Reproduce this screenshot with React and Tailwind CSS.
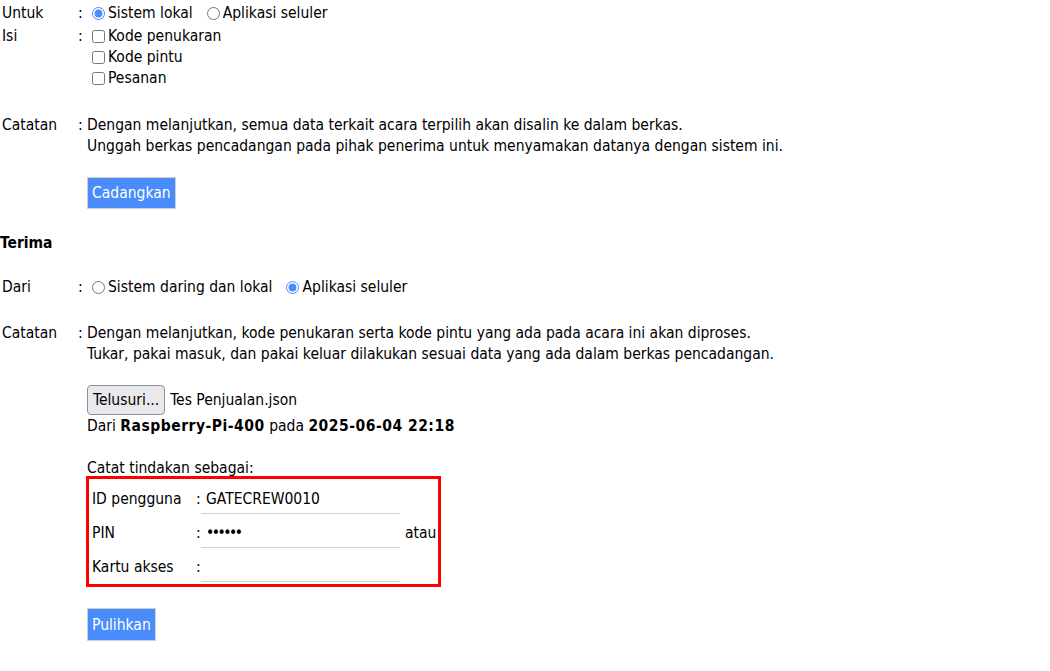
import React, { useState } from "react";

const label = "text-[15.5px] leading-[21px] text-black";
const note = "text-[15.5px] leading-[21px] [font-stretch:condensed]";

const Row = ({ name, children, className = "" }) => (
  <div className={`flex items-start ${className}`}>
    <div className={`w-[78px] pl-[2px] ${label}`}>{name}</div>
    <div className={`w-[10px] ${label}`}>:</div>
    <div className="flex-1">{children}</div>
  </div>
);

const Radio = ({ checked, text, onChange }) => (
  <label className={`flex items-center ${label} mr-[14px]`}>
    <input
      type="radio"
      checked={checked}
      onChange={onChange}
      className="m-0 mr-[3px] h-[13px] w-[13px] accent-[#4a8cfc]"
    />
    {text}
  </label>
);

const Check = ({ text }) => (
  <label className={`flex items-center ${label}`}>
    <input type="checkbox" className="m-0 mr-[3px] h-[13px] w-[13px]" />
    {text}
  </label>
);

const Field = ({ name, value, after, dots = false }) => (
  <div className="flex items-center h-[34px]">
    <div className={`w-[104px] ${label}`}>{name}</div>
    <div className={`w-[5px] ${label}`}>:</div>
    <input
      type="text"
      defaultValue={value}
      className={`w-[199px] h-[30px] px-[5px] border-b border-[#d0d0d0] outline-none text-[15.5px] text-black ${dots ? "tracking-[-2.5px]" : ""}`}
      style={{ fontFamily: "inherit" }}
    />
    {after && <span className={`ml-[5px] ${label}`}>{after}</span>}
  </div>
);

export default function App() {
  const [untuk, setUntuk] = useState("lokal");
  const [dari, setDari] = useState("seluler");

  return (
    <div
      className="w-[1050px] h-[671px] bg-white text-black overflow-hidden pt-[3px]"
      style={{ fontFamily: '"DejaVu Sans Condensed", "DejaVu Sans", sans-serif' }}
    >
      <Row name="Untuk">
        <div className="flex pl-[4px]">
          <Radio checked={untuk === "lokal"} onChange={() => setUntuk("lokal")} text="Sistem lokal" />
          <Radio checked={untuk === "seluler"} onChange={() => setUntuk("seluler")} text="Aplikasi seluler" />
        </div>
      </Row>
      <Row name="Isi" className="mt-[2px]">
        <div className="flex flex-col pl-[4px]">
          <Check text="Kode penukaran" />
          <Check text="Kode pintu" />
          <Check text="Pesanan" />
        </div>
      </Row>

      <Row name="Catatan" className="mt-[26px]">
        <div className={`${note} -ml-[1px]`}>
          <div>Dengan melanjutkan, semua data terkait acara terpilih akan disalin ke dalam berkas.</div>
          <div>Unggah berkas pencadangan pada pihak penerima untuk menyamakan datanya dengan sistem ini.</div>
        </div>
      </Row>

      <div className="pl-[87px] mt-[20px]">
        <button className="h-[32px] px-[4px] pt-[2px] bg-[#4a8cfc] border border-[#cfcfcf] text-white text-[15.5px]">
          Cadangkan
        </button>
      </div>

      <div className="mt-[24px] text-[15.5px] font-bold leading-[21px]">Terima</div>

      <Row name="Dari" className="mt-[23px]">
        <div className="flex pl-[4px]">
          <Radio checked={dari === "daring"} onChange={() => setDari("daring")} text="Sistem daring dan lokal" />
          <Radio checked={dari === "seluler"} onChange={() => setDari("seluler")} text="Aplikasi seluler" />
        </div>
      </Row>

      <Row name="Catatan" className="mt-[25px]">
        <div className={`${note} -ml-[1px]`}>
          <div>Dengan melanjutkan, kode penukaran serta kode pintu yang ada pada acara ini akan diproses.</div>
          <div>Tukar, pakai masuk, dan pakai keluar dilakukan sesuai data yang ada dalam berkas pencadangan.</div>
        </div>
      </Row>

      <div className="pl-[87px] mt-[20px]">
        <div className="flex items-center">
          <button className="h-[30px] px-[5px] bg-[#e9e9ed] border border-[#8f8f9d] rounded-[4px] text-[15.5px] leading-[20px]">
            Telusuri...
          </button>
          <span className={`ml-[5px] mt-[1px] ${note}`}>Tes Penjualan.json</span>
        </div>
        <div className={`${note} mt-[1px]`}>
          Dari <b className="tracking-[0.5px]">Raspberry-Pi-400</b> pada{" "}
          <b className="tracking-[0.5px]">2025-06-04 22:18</b>
        </div>

        <div className={`${label} mt-[21px]`}>Catat tindakan sebagai:</div>
        <div className="w-[355px] border-[3px] border-[#ff0000] -ml-[1px] -mt-[3px] pl-[3px] pt-[3px]">
          <Field name="ID pengguna" value="GATECREW0010" />
          <Field name="PIN" value="••••••" after="atau" dots />
          <Field name="Kartu akses" value="" />
        </div>

        <button className="mt-[21px] h-[33px] px-[4px] pt-[2px] bg-[#4a8cfc] border border-[#cfcfcf] text-white text-[15.5px]">
          Pulihkan
        </button>
      </div>
    </div>
  );
}
